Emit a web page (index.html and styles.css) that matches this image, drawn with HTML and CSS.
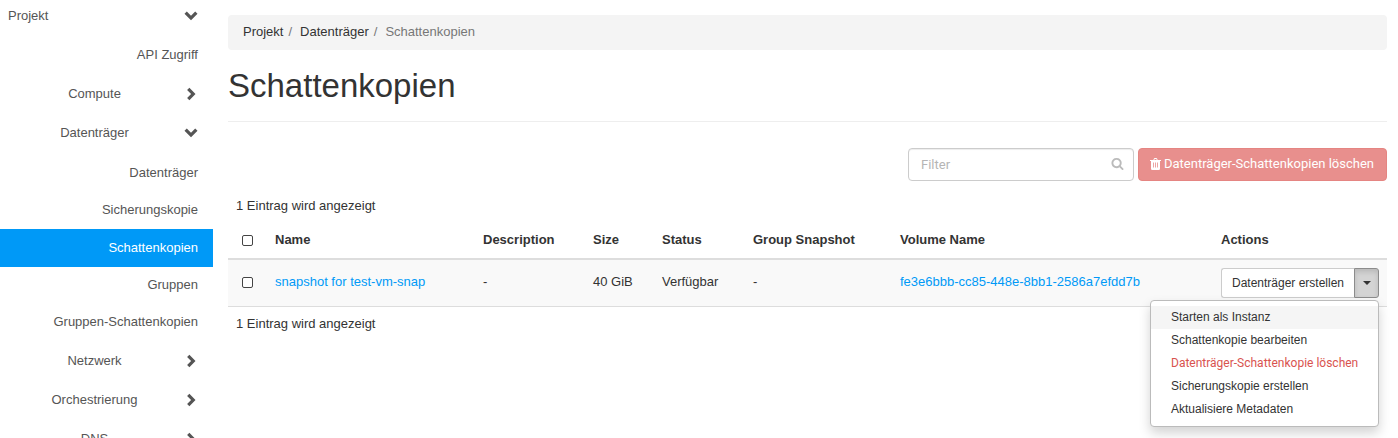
FILE: index.html
```html
<!DOCTYPE html>
<html lang="de">
<head>
<meta charset="utf-8">
<title>Schattenkopien</title>
<link rel="stylesheet" href="styles.css">
</head>
<body>
<svg class="sprite" aria-hidden="true">
  <symbol id="down" viewBox="0 0 14 14"><path d="M7 11.200.5 4.800 2.800 2.600 7 6.700l4.200-4.100 2.300 2.200z"/></symbol>
  <symbol id="right" viewBox="0 0 14 14"><path d="M11.500 7 5.400 13.200 3.100 11 7.100 7 3.100 3 5.400.8z"/></symbol>
</svg>
<div class="layout">
  <nav class="sidebar">
    <button class="toggle toggle-root" type="button"><span class="toggle-label">Projekt</span><svg class="chevron"><use href="#down"/></svg></button>
    <a class="leaf" href="#">API Zugriff</a>
    <button class="toggle" type="button"><span class="toggle-label">Compute</span><svg class="chevron"><use href="#right"/></svg></button>
    <button class="toggle" type="button"><span class="toggle-label">Datenträger</span><svg class="chevron"><use href="#down"/></svg></button>
    <div class="leaves">
      <a class="leaf" href="#">Datenträger</a>
      <a class="leaf" href="#">Sicherungskopie</a>
      <a class="leaf active" href="#" aria-current="page">Schattenkopien</a>
      <a class="leaf" href="#">Gruppen</a>
      <a class="leaf" href="#">Gruppen-Schattenkopien</a>
    </div>
    <button class="toggle" type="button"><span class="toggle-label">Netzwerk</span><svg class="chevron"><use href="#right"/></svg></button>
    <button class="toggle" type="button"><span class="toggle-label">Orchestrierung</span><svg class="chevron"><use href="#right"/></svg></button>
    <button class="toggle" type="button"><span class="toggle-label">DNS</span><svg class="chevron"><use href="#right"/></svg></button>
  </nav>
  <main class="content">
    <ol class="breadcrumb">
      <li><a href="#">Projekt</a></li>
      <li><a href="#">Datenträger</a></li>
      <li class="current">Schattenkopien</li>
    </ol>
    <h1 class="title">Schattenkopien</h1>
    <div class="toolbar">
      <div class="search">
        <input class="search-input" type="text" placeholder="Filter" aria-label="Filter">
        <svg class="search-icon" viewBox="0 0 1664 1792"><path d="M1152 832q0-185-131.500-316.500t-316.500-131.500-316.500 131.500-131.500 316.500 131.500 316.500 316.500 131.500 316.500-131.500 131.500-316.500zm512 832q0 52-38 90t-90 38q-54 0-90-38l-343-342q-179 124-399 124-143 0-273.500-55.500t-225-150-150-225-55.500-273.500 55.500-273.500 150-225 225-150 273.500-55.500 273.500 55.500 225 150 150 225 55.500 273.500q0 220-124 399l343 343q37 37 37 90z"/></svg>
      </div>
      <button class="delete" type="button" disabled>
        <svg class="trash" viewBox="0 0 11 12"><path fill-rule="evenodd" d="M3.300 2 4 .500Q4.200 0 4.700 0h1.600q.500 0 .700.500L7.700 2H11v1h-1v7.500Q10 12 8.700 12H2.300Q1 12 1 10.500V3H0V2zM4.300 2h2.400L6.300 1H4.700zM3 4.500v5h.8v-5zm2.100 0v5h.8v-5zm2.100 0v5H8v-5z"/></svg>
        <span>Datenträger-Schattenkopien löschen</span>
      </button>
    </div>
    <div class="count">1 Eintrag wird angezeigt</div>
    <table class="table">
      <colgroup>
        <col class="col-check"><col class="col-name"><col class="col-desc"><col class="col-size"><col class="col-status"><col class="col-group"><col><col class="col-actions">
      </colgroup>
      <thead>
        <tr>
          <th class="check-cell"><input class="check" type="checkbox" aria-label="Alle auswählen"></th>
          <th>Name</th><th>Description</th><th>Size</th><th>Status</th><th>Group Snapshot</th><th>Volume Name</th><th>Actions</th>
        </tr>
      </thead>
      <tbody>
        <tr>
          <td class="check-cell"><input class="check" type="checkbox" aria-label="snapshot for test-vm-snap auswählen"></td>
          <td><a href="#">snapshot for test-vm-snap</a></td>
          <td>-</td>
          <td>40 GiB</td>
          <td>Verfügbar</td>
          <td>-</td>
          <td><a href="#">fe3e6bbb-cc85-448e-8bb1-2586a7efdd7b</a></td>
          <td class="actions-cell">
            <div class="actions">
              <button class="create" type="button">Datenträger erstellen</button>
              <button class="caret-button" type="button" aria-label="Weitere Aktionen" aria-expanded="true"><span class="caret"></span></button>
              <ul class="menu">
                <li><button class="menu-item hover" type="button">Starten als Instanz</button></li>
                <li><button class="menu-item" type="button">Schattenkopie bearbeiten</button></li>
                <li><button class="menu-item danger" type="button">Datenträger-Schattenkopie löschen</button></li>
                <li><button class="menu-item" type="button">Sicherungskopie erstellen</button></li>
                <li><button class="menu-item" type="button">Aktualisiere Metadaten</button></li>
              </ul>
            </div>
          </td>
        </tr>
      </tbody>
    </table>
    <div class="count">1 Eintrag wird angezeigt</div>
  </main>
</div>
</body>
</html>
```
FILE: styles.css
```css
* {
  box-sizing: border-box;
}

body {
  margin: 0;
  height: 100vh;
  overflow: hidden;
  background: #fff;
  color: #333;
  font: 13px/18px "Liberation Sans", Arial, sans-serif;
}

a {
  color: #0099f7;
  text-decoration: none;
}

button,
input {
  margin: 0;
  font: inherit;
}

.sprite {
  display: none;
}

.layout {
  display: flex;
}

/* Sidebar */
.sidebar {
  display: flex;
  flex-direction: column;
  flex: 0 0 213px;
}

.toggle {
  display: flex;
  align-items: center;
  height: 39px;
  padding: 0 15px 0 5px;
  border: 0;
  background: none;
  color: #555;
}

.toggle-root {
  height: 36px;
  padding: 0 15px 4px 8px;
  text-align: left;
}

.toggle-label {
  flex: 1;
}

.chevron {
  width: 14px;
  height: 14px;
  fill: #555;
}

.leaf {
  display: block;
  padding: 10px 15px;
  color: #555;
  text-align: right;
}

.leaves {
  padding-top: 3px;
}

.leaves .leaf {
  padding: 9px 15px 10px;
}

.leaves .leaf.active {
  padding: 10px 15px;
  background: #0099f7;
  color: #fff;
}

/* Main column */
.content {
  flex: 1;
  min-width: 0;
  padding: 15px 11px 0 15px;
}

.breadcrumb {
  display: flex;
  margin: 0;
  padding: 8px 15px 9px;
  border-radius: 4px;
  background: #f4f4f4;
  list-style: none;
}

.breadcrumb a {
  color: #333;
}

.breadcrumb li + li::before {
  content: "/";
  padding: 0 8px 0 5px;
  color: #777;
}

.breadcrumb .current {
  color: #777;
}

.title {
  margin: 0 0 26px;
  padding: 17px 0;
  border-bottom: 1px solid #eee;
  font-size: 33px;
  font-weight: 400;
  line-height: 37px;
}

.toolbar {
  display: flex;
  justify-content: flex-end;
  gap: 4px;
  margin-bottom: 16px;
  font-family: Roboto, sans-serif;
}

.search {
  position: relative;
  width: 226px;
}

.search-input {
  width: 100%;
  height: 33px;
  padding: 6px 32px 6px 12px;
  border: 1px solid #ccc;
  border-radius: 4px;
  box-shadow: inset 0 1px 1px rgba(0, 0, 0, 0.075);
}

.search-input::placeholder {
  color: #b5b5b5;
}

.search-icon {
  position: absolute;
  top: 9px;
  right: 10px;
  width: 13px;
  height: 13px;
  fill: #bbb;
}

.delete {
  display: flex;
  align-items: center;
  gap: 3px;
  height: 33px;
  padding: 0 12px 2px 11px;
  border: 1px solid #e58582;
  border-radius: 4px;
  background: #e88f8d;
  color: #fff;
}

.trash {
  width: 11px;
  height: 12px;
  fill: #fff;
}

.count {
  padding: 0 8px;
}

/* Table */
.table {
  width: 100%;
  margin: 6px 0 8px;
  border-collapse: collapse;
  table-layout: fixed;
}

.col-check { width: 39px; }
.col-name { width: 208px; }
.col-desc { width: 110px; }
.col-size { width: 69px; }
.col-status { width: 91px; }
.col-group { width: 147px; }
.col-actions { width: 174px; }

.table th,
.table td {
  padding: 8px 8px 10px;
  text-align: left;
}

.table th {
  padding: 10px 8px 9px;
  border-bottom: 2px solid #ddd;
}

.table td {
  border-bottom: 1px solid #ddd;
  background: #f9f9f9;
}

.table .check-cell {
  padding-left: 14px;
}

.table .actions-cell {
  padding: 8px;
}

.check {
  display: block;
  width: 11px;
  height: 11px;
  border: 1px solid #444;
  border-radius: 2px;
  background: #fff;
  appearance: none;
}

.actions {
  display: flex;
  position: relative;
  height: 30px;
  font-size: 12px;
}

.create {
  flex: 1;
  padding: 0;
  border: 1px solid #ccc;
  border-right: 0;
  border-radius: 3px 0 0 3px;
  background: #fff;
  color: #333;
  white-space: nowrap;
}

.caret-button {
  display: flex;
  align-items: center;
  justify-content: center;
  width: 25px;
  padding: 0;
  border: 1px solid #8c8c8c;
  border-radius: 0 3px 3px 0;
  background: #d4d4d4;
  box-shadow: inset 0 3px 5px rgba(0, 0, 0, 0.125);
}

.caret {
  border: 4px solid transparent;
  border-top-color: #333;
  border-bottom: 0;
}

.menu {
  position: absolute;
  top: 100%;
  right: 0;
  z-index: 1;
  width: 229px;
  margin: 2px 0 0;
  padding: 5px 0;
  border: 1px solid #bbb;
  border-radius: 4px;
  background: #fff;
  box-shadow: 0 6px 12px rgba(0, 0, 0, 0.175);
  list-style: none;
}

.menu-item {
  display: block;
  width: 100%;
  padding: 3px 20px;
  border: 0;
  background: none;
  color: #333;
  line-height: 17px;
  text-align: left;
  white-space: nowrap;
}

.menu-item.hover {
  background: #f5f5f5;
}

.menu-item.danger {
  color: #d9534f;
  font-family: Roboto, sans-serif;
}
```
